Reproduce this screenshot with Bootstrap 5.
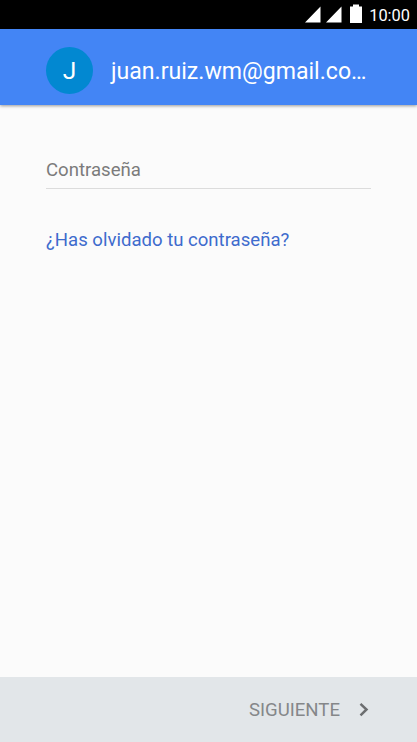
<!DOCTYPE html>
<html lang="es">
<head>
<meta charset="utf-8">
<meta name="viewport" content="width=device-width, initial-scale=1">
<title>Iniciar sesión</title>
<link href="https://cdn.jsdelivr.net/npm/bootstrap@5.3.0/dist/css/bootstrap.min.css" rel="stylesheet">
<style>
body{font-family:Roboto,"Noto Sans",sans-serif;background:#fbfbfb;height:742px;overflow:hidden}
.statusbar{height:29px;background:#000;color:#fff;font-size:16.4px;line-height:20px;padding:2px 7px 0 0}
.status-icons{margin-top:-3px;margin-right:7px}
.account-bar{height:76px;background:#4385f5;color:#fff;padding:7px 46px 0;box-shadow:0 1px 3px rgba(0,0,0,.4)}
.avatar{width:47px;height:47px;background:#0288d1;font-size:24.5px;padding-top:2px}
.email{font-size:23.1px;margin-left:18px;line-height:30px;padding-top:2px}
.form-area{padding:46px 46px 0}
.pass-input,.pass-input:focus{height:38px;border:0;border-bottom:1px solid #dcdcdc;border-radius:0;background:transparent;padding:0;font-size:18.6px;box-shadow:none}
.pass-input::placeholder{color:#7b7b7b;opacity:1}
.forgot{font-size:18.57px;color:#3e6bcd;line-height:24px;margin-top:39px}
.bottom-bar{height:65px;background:#e2e6e9;padding-right:46px}
.next-btn,.next-btn:hover{font-size:18.6px;color:#858789;line-height:24px}
.chevron{color:#6c6e70;margin-left:18px;margin-right:1px}
</style>
<script src="https://cdn.jsdelivr.net/npm/bootstrap@5.3.0/dist/js/bootstrap.bundle.min.js"></script>
</head>
<body class="d-flex flex-column m-0">
<div class="statusbar d-flex align-items-center justify-content-end flex-shrink-0">
<svg class="status-icons" width="57" height="20" viewBox="0 0 57 20" fill="#fff"><path d="M0 18.5 15.5 2.5v16zM21 18.5 36.5 2.5v16zM45 2.5h3V.5h6v2h3v16.5H45z"/></svg>
<span>10:00</span>
</div>
<header class="account-bar d-flex align-items-center flex-shrink-0">
<div class="avatar rounded-circle d-flex align-items-center justify-content-center flex-shrink-0">J</div>
<div class="email text-nowrap">juan.ruiz.wm@gmail.co…</div>
</header>
<main class="form-area flex-grow-1">
<input class="form-control pass-input" type="password" placeholder="Contraseña" aria-label="Contraseña">
<a href="#" class="forgot d-inline-block text-decoration-none">¿Has olvidado tu contraseña?</a>
</main>
<footer class="bottom-bar d-flex align-items-center justify-content-end flex-shrink-0">
<button class="btn next-btn border-0 p-0 d-flex align-items-center" type="button">SIGUIENTE
<svg class="chevron" width="12" height="16" viewBox="0 0 12 16" fill="none" stroke="currentColor" stroke-width="2.5"><path d="M2.5 1.8 8.5 7.5l-6 5.8"/></svg></button>
</footer>
</body>
</html>
